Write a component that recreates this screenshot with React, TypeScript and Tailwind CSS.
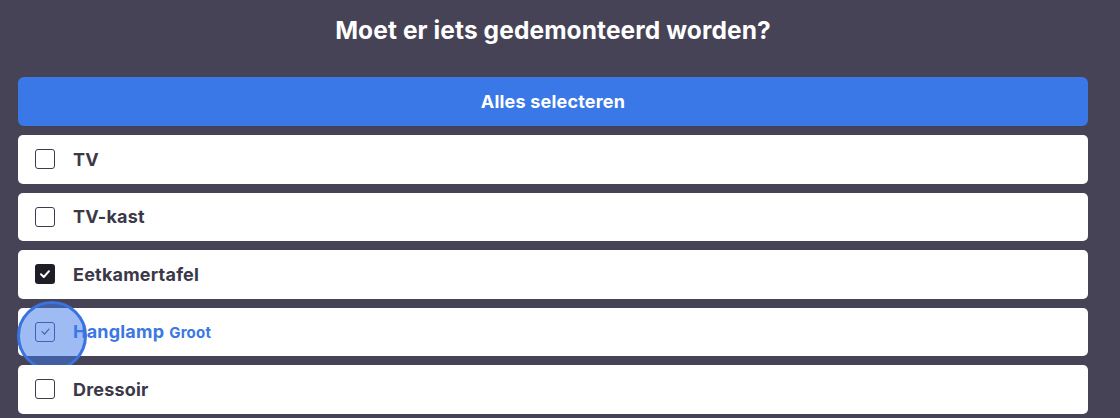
import { useState } from "react";

type Item = {
    id: string;
    label: string;
    extra?: string;
};

const items: Item[] = [
    { id: "tv", label: "TV" },
    { id: "tvkast", label: "TV-kast" },
    { id: "eettafel", label: "Eetkamertafel" },
    { id: "hanglamp", label: "Hanglamp", extra: "Groot" },
    { id: "dressoir", label: "Dressoir" },
];

function Checkbox({ state }: { state: "off" | "on" | "hover" }) {
    if (state === "on") {
        return (
            <span className="flex h-[20px] w-[20px] items-center justify-center rounded-[3px] bg-[#1f1d26]">
                <svg width="12" height="12" viewBox="0 0 12 12" fill="none">
                    <path d="M2 6.3 4.8 9 10 3.2" stroke="#fff" strokeWidth="2" strokeLinecap="round" strokeLinejoin="round" />
                </svg>
            </span>
        );
    }
    if (state === "hover") {
        return (
            <span className="flex h-[20px] w-[20px] items-center justify-center rounded-[3px] border-[1.5px] border-[#3c4d85]">
                <svg width="11" height="11" viewBox="0 0 12 12" fill="none">
                    <path d="M2.2 6.2 4.8 8.8 9.8 3.4" stroke="#3c4d85" strokeWidth="1.3" strokeLinecap="round" strokeLinejoin="round" />
                </svg>
            </span>
        );
    }
    return <span className="block h-[20px] w-[20px] rounded-[3px] border-[1.5px] border-[#3d3b4c] bg-white" />;
}

export default function App() {
    const [selected] = useState<string[]>(["eettafel"]);

    return (
        <div className="h-[418px] w-[1120px] overflow-hidden bg-[#464356] px-[18px] font-['Inter',sans-serif]">
            <div className="w-[1070px]">
                {/* Titel */}
                <h1 className="pt-[16px] text-center text-[24.5px] font-bold leading-[28px] tracking-[0.1px] text-white">
                    Moet er iets gedemonteerd worden?
                </h1>

                <div className="mt-[33px] flex flex-col gap-[9px]">
                    <button className="h-[49px] w-full rounded-[6px] bg-[#3a78e8] text-[18px] font-bold tracking-[0.2px] text-white">
                        Alles selecteren
                    </button>

                    {items.map((item) => {
                        const isHover = item.id === "hanglamp";
                        const isOn = selected.includes(item.id);
                        return (
                            <div
                                key={item.id}
                                className="relative flex h-[48.5px] items-center gap-[18px] rounded-[5px] bg-white pl-[17px]"
                            >
                                <Checkbox state={isOn ? "on" : isHover ? "hover" : "off"} />
                                {isHover ? (
                                    <span className="flex items-baseline gap-[5px] tracking-[0.2px] text-[#3b78e3]">
                                        <span className="text-[18px] font-bold">{item.label}</span>
                                        <span className="text-[15px] font-bold">{item.extra}</span>
                                    </span>
                                ) : (
                                    <span className="text-[18px] font-bold tracking-[0.2px] text-[#3b3948]">{item.label}</span>
                                )}
                                {isHover && (
                                    <span className="pointer-events-none absolute left-[-1px] top-[-7px] h-[70px] w-[70px] rounded-full border-[3px] border-[#3a73e0] bg-[#3d78ea]/50" />
                                )}
                            </div>
                        );
                    })}
                </div>
            </div>
        </div>
    );
}
